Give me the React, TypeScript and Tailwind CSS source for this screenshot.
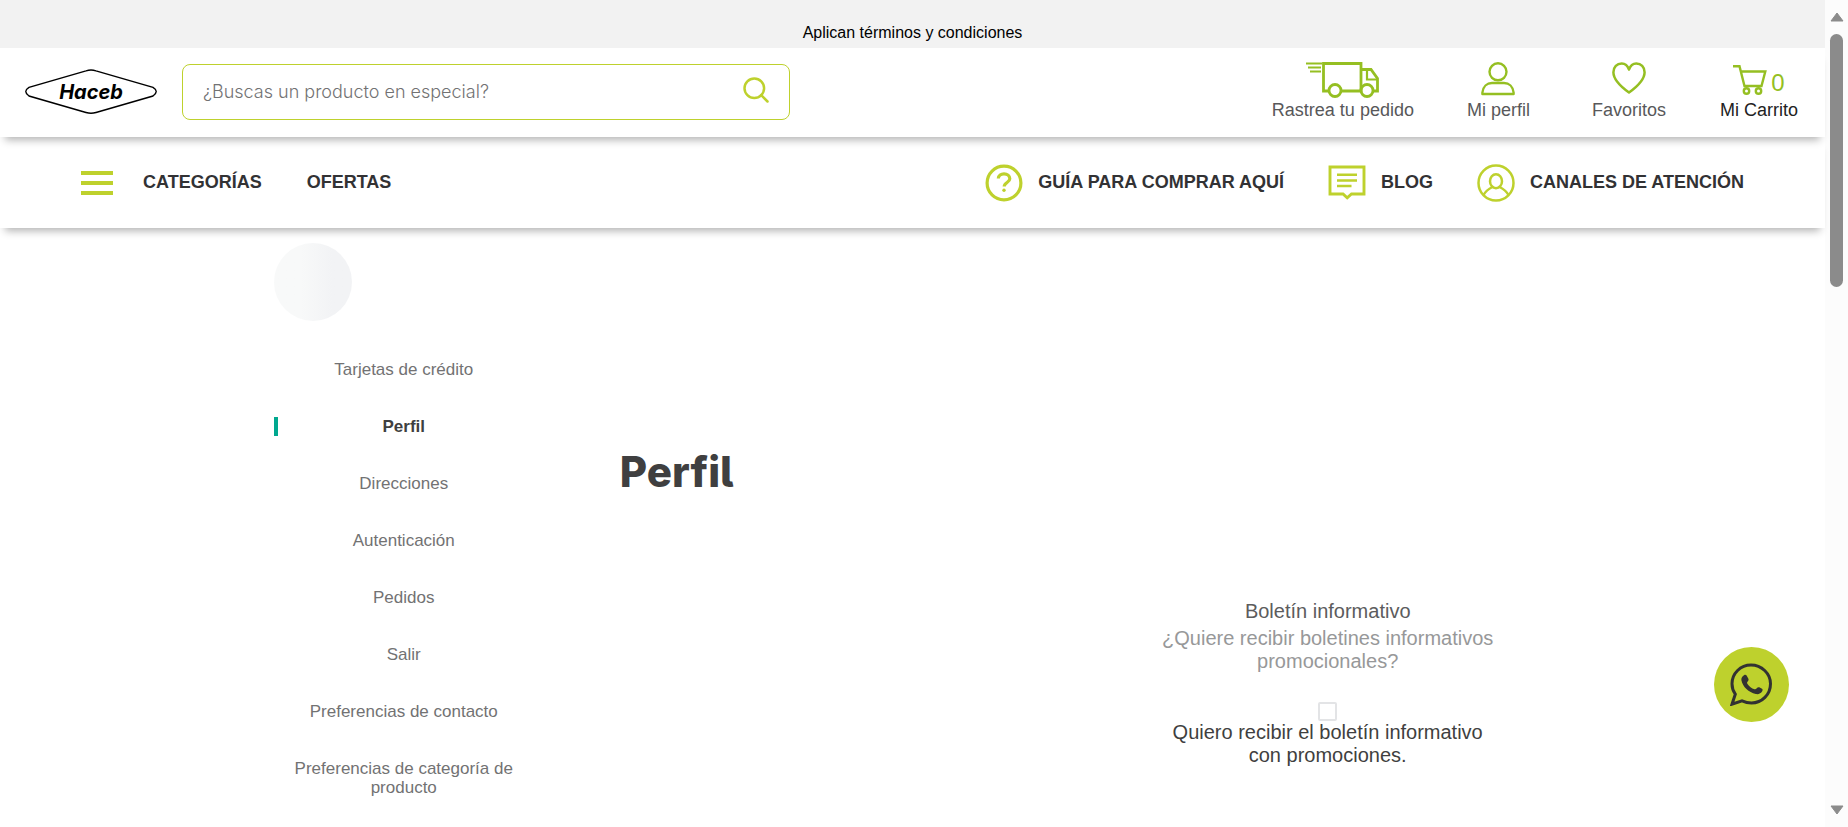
import type { ReactNode } from "react";

function Logo() {
  return (
    <svg width="132" height="46" viewBox="0 0 132 46" role="img" aria-label="Haceb">
      <path
        d="M61 1.9Q66 .2 71 1.9L128 18.4Q134.500 22.500 128 27L71 43.500Q66 45 61 43.500L4 27Q-2.500 22.500 4 18.400Z"
        fill="#fff"
        stroke="#000"
        strokeWidth="1.4"
      />
      <text
        x="66"
        y="30"
        textAnchor="middle"
        className="fill-black text-[20px] font-bold italic [font-family:Inter,sans-serif] [font-feature-settings:'cv11']"
      >
        Haceb
      </text>
    </svg>
  );
}

function TruckIcon() {
  return (
    <svg width="74" height="36" viewBox="0 0 74 36" fill="none" stroke="#95bf22" strokeWidth="2.8">
      <path d="M0 1.500H16M2 5.500H15M4 9.500H15" strokeWidth="1.8" />
      <path d="M23.500 29H17.500V1.500H55V29H35M55 7.500H65L71.500 16.500V29H67" />
      <path d="M61 8V17.500H71" strokeWidth="2.2" />
      <circle cx="29" cy="28.500" r="6" />
      <circle cx="61" cy="28.500" r="6" />
    </svg>
  );
}

function ProfileIcon() {
  return (
    <svg width="34" height="34" viewBox="0 0 34 34" fill="none" stroke="#95bf22" strokeWidth="2.4">
      <circle cx="17" cy="9.800" r="8.500" />
      <path d="M1.400 32V30.500C2 24.500 6 21 11 21H23C28 21 32 24.500 32.600 30.500V32Z" strokeLinejoin="round" />
    </svg>
  );
}

function HeartIcon() {
  return (
    <svg width="34" height="34" viewBox="0 0 34 34" fill="none" stroke="#95bf22" strokeWidth="2.5">
      <path
        d="M17 30.500C8 24 1.400 17.500 1.400 10.200C1.400 5 5 1.400 9.700 1.400C13 1.400 15.800 4 17 7.500C18.200 4 21 1.400 24.300 1.400C29 1.400 32.600 5 32.600 10.200C32.600 17.500 26 24 17 30.500Z"
        strokeLinejoin="round"
      />
    </svg>
  );
}

function CartIcon() {
  return (
    <svg width="34" height="30" viewBox="0 0 34 30" fill="none" stroke="#95bf22" strokeWidth="2.400">
      <path d="M0 1.300H6.500L11.500 21H28.500L32.300 6.500H8" />
      <circle cx="13.500" cy="26" r="2.700" />
      <circle cx="25.500" cy="26" r="2.700" />
    </svg>
  );
}

function SearchIcon() {
  return (
    <svg width="26" height="26" viewBox="0 0 26 26" fill="none" stroke="#bed12d" strokeWidth="2.500">
      <circle cx="11.300" cy="11.300" r="9.800" />
      <path d="M18.200 18.200L24.500 24.500" strokeLinecap="round" />
    </svg>
  );
}

function HelpIcon() {
  return (
    <svg width="38" height="38" viewBox="0 0 38 38" fill="none" stroke="#bed12d" strokeWidth="3.2">
      <circle cx="19" cy="19" r="16.900" />
      <path d="M13.300 14.500C13.500 11.500 16 9.800 19 9.800C22.300 9.800 24.800 11.800 24.800 14.800C24.800 18.500 19.200 18.500 19.200 22.500" />
      <circle cx="19" cy="26.200" r="1.700" fill="#bed12d" stroke="none" />
    </svg>
  );
}

function BlogIcon() {
  return (
    <svg width="38" height="38" viewBox="0 0 38 38" fill="none" stroke="#bed12d" strokeWidth="2.900">
      <path d="M2 3H36V30H23.500L19.200 33.800L15 30H2Z" />
      <path d="M9 10.800H29M9 16.500H29M9 22H23.500" strokeWidth="2.600" />
    </svg>
  );
}

function SupportIcon() {
  return (
    <svg width="38" height="38" viewBox="0 0 38 38" fill="none" stroke="#bed12d" strokeWidth="2.500">
      <circle cx="19" cy="19" r="17.500" />
      <ellipse cx="19" cy="17.200" rx="6" ry="7" />
      <path d="M6.500 31C8.500 27.500 11.500 25 15.500 23M22.500 23C26.500 25 29.500 27.500 31.500 31" />
    </svg>
  );
}

function WhatsappIcon() {
  return (
    <svg width="43" height="43" viewBox="0 0 43 43" fill="none" aria-hidden="true">
      <path
        d="M2 41.200L5.300 31.200C3 28 2 24.500 2 20.800C2 10.500 10.500 2 21 2C31.500 2 40.500 10.500 40.500 20.800C40.500 31.500 32 40 21.500 40C18 40 15 39.200 12 37.800Z"
        stroke="#323232"
        strokeWidth="3"
      />
      <path
        d="M14 12.300C15 11.500 16 11.700 16.600 12.600L18.400 15.800C18.800 16.800 18.500 17.600 17.700 18.600C17 19.400 16.900 20 17.500 20.900C19.300 23.300 21.500 25.300 24.500 26.200C25.300 26.500 25.900 26.300 26.500 25.600C27.500 24.300 28.300 23.900 29.300 24.300L32 25.700C32.800 26.300 32.800 27.200 32.200 28.300C31 30.500 28.500 31.500 25.800 31C18.700 29.500 12.800 24 11.400 17.300C11.100 15.300 12 13.500 14 12.300Z"
        fill="#323232"
      />
    </svg>
  );
}

function HeaderLink({ icon, label, className }: { icon: ReactNode; label: string; className: string }) {
  return (
    <a href="#" className={`flex flex-col items-center text-lg leading-6 whitespace-nowrap ${className}`}>
      <span className="flex h-9 items-start">{icon}</span>
      {label}
    </a>
  );
}

function NavLink({ icon, label }: { icon: ReactNode; label: string }) {
  return (
    <a href="#" className="flex items-center gap-[15px] whitespace-nowrap">
      {icon}
      {label}
    </a>
  );
}

const accountLinks = [
  "Tarjetas de crédito",
  "Perfil",
  "Direcciones",
  "Autenticación",
  "Pedidos",
  "Salir",
  "Preferencias de contacto",
  "Preferencias de categoría de producto",
];

function ScrollRail() {
  return (
    <div aria-hidden="true" className="sticky top-0 flex h-screen w-[23px] shrink-0 flex-col items-center bg-[#fcfcfc] py-3">
      <svg width="14" height="10" viewBox="0 0 14 10">
        <path d="M7 1L13 9H1Z" fill="#8b8b8b" stroke="#8b8b8b" strokeLinejoin="round" />
      </svg>
      <div className="flex grow flex-col py-3">
        <div className="h-1/3 w-[13px] rounded-full bg-[#8b8b8b]" />
      </div>
      <svg width="14" height="10" viewBox="0 0 14 10">
        <path d="M7 9L13 1H1Z" fill="#8b8b8b" stroke="#8b8b8b" strokeLinejoin="round" />
      </svg>
    </div>
  );
}

export default function App() {
  return (
    <div className="flex min-h-screen bg-white [font-family:'Liberation_Sans',Arial,sans-serif]">
      <div className="flex min-w-0 grow flex-col">
        <div className="flex h-12 items-end justify-center bg-[#f2f2f2] pb-[3px] text-base leading-6 text-black">
          Aplican términos y condiciones
        </div>

        <header className="relative z-20 flex h-[89px] shrink-0 items-center bg-white pr-[27px] pb-0.5 pl-[25px] shadow-[0_8px_8px_-5px_rgba(0,0,0,0.3)]">
          <a href="#" className="shrink-0">
            <Logo />
          </a>
          <form role="search" className="ml-[25px] flex h-14 w-[34.3%] items-center rounded-lg border border-[#bed12d] px-5">
            <input
              type="text"
              aria-label="Buscar productos"
              placeholder="¿Buscas un producto en especial?"
              className="min-w-0 grow bg-transparent text-[18px] font-light text-gray-700 outline-none placeholder:text-[#727273] [font-family:Inter,sans-serif]"
            />
            <button type="button" aria-label="Buscar" className="pb-1">
              <SearchIcon />
            </button>
          </form>
          <div className="ml-auto flex text-[#58585a]">
            <HeaderLink icon={<TruckIcon />} label="Rastrea tu pedido" className="" />
            <HeaderLink icon={<ProfileIcon />} label="Mi perfil" className="ml-[53px]" />
            <HeaderLink icon={<HeartIcon />} label="Favoritos" className="ml-[62px]" />
            <HeaderLink
              icon={
                <span className="flex items-end gap-1 pt-[3px] text-[#95bf22]">
                  <CartIcon />
                  <span className="text-2xl leading-6">0</span>
                </span>
              }
              label="Mi Carrito"
              className="ml-[54px] text-[#222222]"
            />
          </div>
        </header>

        <nav className="relative z-10 flex h-[91px] shrink-0 items-center bg-white px-[81px] text-[18px] font-bold text-[#323234] shadow-[0_8px_8px_-5px_rgba(0,0,0,0.3)]">
          <button type="button" className="flex items-center gap-[30px]">
            <span className="flex w-8 flex-col gap-[6px]">
              <span className="h-1 bg-[#bed12d]" />
              <span className="h-1 bg-[#bed12d]" />
              <span className="h-1 bg-[#bed12d]" />
            </span>
            CATEGORÍAS
          </button>
          <a href="#" className="ml-[45px]">
            OFERTAS
          </a>
          <div className="ml-auto flex gap-[44px]">
            <NavLink icon={<HelpIcon />} label="GUÍA PARA COMPRAR AQUÍ" />
            <NavLink icon={<BlogIcon />} label="BLOG" />
            <NavLink icon={<SupportIcon />} label="CANALES DE ATENCIÓN" />
          </div>
        </nav>

        <div className="flex px-[15%] pt-[15px]">
          <aside className="w-65 shrink-0">
            <div className="size-[78px] rounded-full bg-linear-to-r from-[#f8f9f9] via-[#f8f9f9] via-35% to-[#f2f3f5] to-75%" />
            <ul className="pt-[39px] text-center text-[17px] leading-[19px] text-[#727273]">
              {accountLinks.map((label) => (
                <li key={label} className="pb-[38px] last:pb-0">
                  {label === "Perfil" ? (
                    <a href="#" aria-current="page" className="block border-l-4 border-[#00a88f] pr-1 font-bold text-[#3f3f40]">
                      {label}
                    </a>
                  ) : (
                    <a href="#" className="block px-2">
                      {label}
                    </a>
                  )}
                </li>
              ))}
            </ul>
          </aside>

          <main className="ml-[86px] grow pt-52">
            <h1 className="text-[42px] leading-[42px] font-extrabold text-[#3f3f40] [font-family:Inter,sans-serif] [font-feature-settings:'cv05']">
              Perfil
            </h1>
            <section className="ml-auto flex w-[48%] flex-col items-center pt-[107px] text-center text-[20px] leading-[23px]">
              <h2 className="pb-1 text-[#5c5c5d]">Boletín informativo</h2>
              <p className="max-w-85 text-[#979899]">¿Quiere recibir boletines informativos promocionales?</p>
              <label className="flex max-w-85 flex-col items-center pt-[29px] text-[#3f3f40]">
                <input type="checkbox" className="size-[19px] appearance-none rounded-xs border-2 border-[#e3e4e6] bg-white" />
                Quiero recibir el boletín informativo con promociones.
              </label>
            </section>
          </main>
        </div>
      </div>

      <a
        href="#"
        aria-label="WhatsApp"
        className="fixed right-[59px] bottom-[105px] z-30 flex size-[75px] items-center justify-center rounded-full bg-[#bed12d]"
      >
        <WhatsappIcon />
      </a>
      <ScrollRail />
    </div>
  );
}
